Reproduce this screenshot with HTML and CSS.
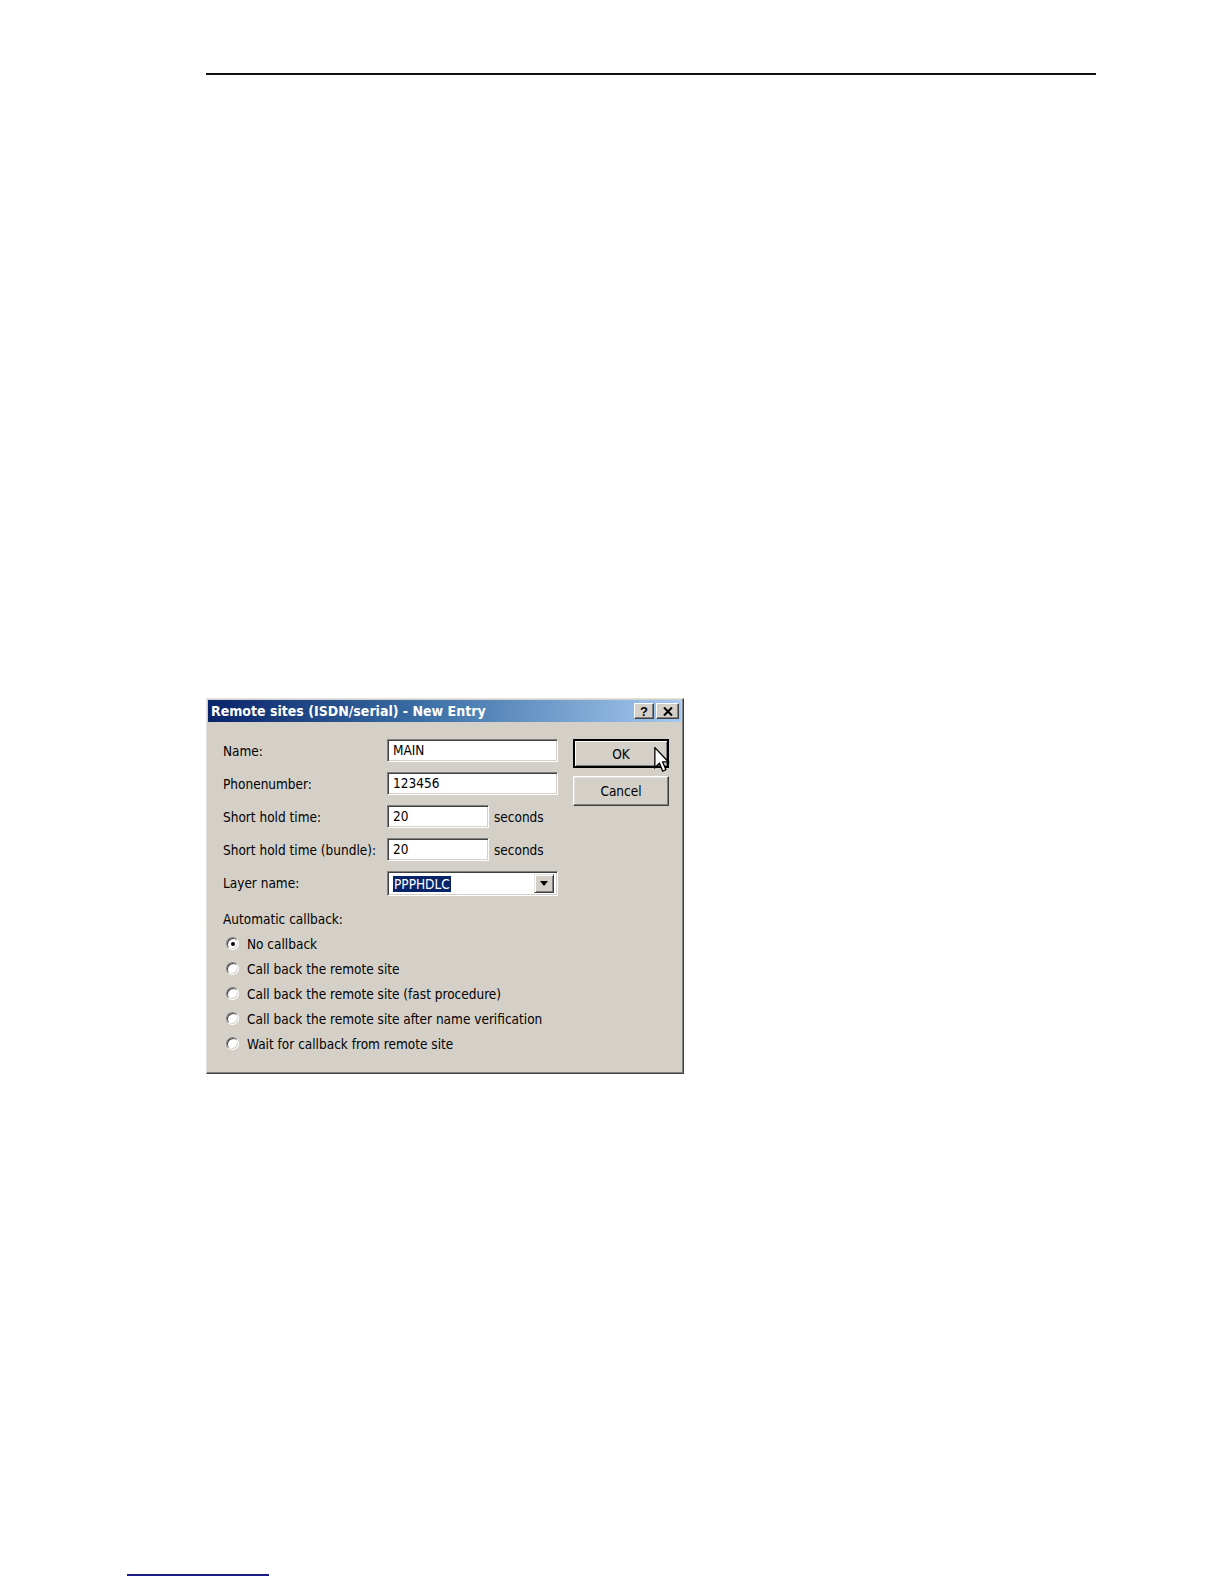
FILE: index.html
```html
<!DOCTYPE html>
<html lang="en">

<head>
    <meta charset="UTF-8">
    <meta name="viewport" content="width=device-width, initial-scale=1.0">
    <title>Remote sites (ISDN/serial) - New Entry</title>
    <link rel="stylesheet" href="styles.css">
</head>

<body>
    <div class="page">
        <div class="top-rule"></div>

        <div class="dialog">
            <div class="titlebar">
                <span class="title">Remote sites (ISDN/serial) - New Entry</span>
                <div class="title-buttons">
                    <div class="tbtn tbtn--help">?</div>
                    <div class="tbtn tbtn--close">
                        <svg width="10" height="9" viewBox="0 0 10 9">
                            <path d="M1 0.5 L9 8.5 M9 0.5 L1 8.5" stroke="#000" stroke-width="2" />
                        </svg>
                    </div>
                </div>
            </div>

            <div class="dialog-body">
                <div class="form">
                    <div class="fields">
                        <label class="field-label">Name:</label>
                        <div class="field-cell"><div class="textbox">MAIN</div></div>

                        <label class="field-label">Phonenumber:</label>
                        <div class="field-cell"><div class="textbox">123456</div></div>

                        <label class="field-label">Short hold time:</label>
                        <div class="field-cell">
                            <div class="textbox textbox--short">20</div>
                            <span class="unit">seconds</span>
                        </div>

                        <label class="field-label">Short hold time (bundle):</label>
                        <div class="field-cell">
                            <div class="textbox textbox--short">20</div>
                            <span class="unit">seconds</span>
                        </div>

                        <label class="field-label">Layer name:</label>
                        <div class="field-cell">
                            <div class="combo">
                                <span class="combo-value">PPPHDLC</span>
                                <div class="combo-btn">
                                    <svg width="8" height="5" viewBox="0 0 8 5">
                                        <path d="M0 0 L8 0 L4 5 Z" fill="#000" />
                                    </svg>
                                </div>
                            </div>
                        </div>
                    </div>

                    <div class="callback">
                        <div class="callback-title">Automatic callback:</div>
                        <div class="radio-row"><span class="radio radio--on"></span>No callback</div>
                        <div class="radio-row"><span class="radio"></span>Call back the remote site</div>
                        <div class="radio-row"><span class="radio"></span>Call back the remote site (fast procedure)</div>
                        <div class="radio-row"><span class="radio"></span>Call back the remote site after name verification</div>
                        <div class="radio-row"><span class="radio"></span>Wait for callback from remote site</div>
                    </div>
                </div>

                <div class="buttons">
                    <div class="btn btn--default">OK</div>
                    <div class="btn">Cancel</div>
                    <svg class="cursor" width="16" height="26" viewBox="0 0 12 20">
                        <path d="M0.5 0.5 L0.5 16 L4 12.5 L6.5 18.5 L9 17.5 L6.5 11.5 L11 11.5 Z" fill="#fff" stroke="#000" stroke-width="1" stroke-linejoin="miter" />
                    </svg>
                </div>
            </div>
        </div>

        <div class="foot-rule"></div>
    </div>
</body>

</html>
```

FILE: styles.css
```css
html {
    background-color: #fff;
}

body {
    margin: 0;
    font-family: "DejaVu Sans Condensed", "Liberation Sans", Arial, sans-serif;
    font-stretch: condensed;
    font-size: 13.5px;
    color: #000;
}

.page {
    width: 1224px;
    height: 1584px;
    overflow: hidden;
}

.top-rule {
    margin: 73px 0 0 206px;
    width: 890px;
    height: 2px;
    background: #111;
}

/* dialog window */

.dialog {
    box-sizing: border-box;
    margin: 623px 0 0 206px;
    width: 478px;
    height: 376px;
    background: #d4d0c8;
    border: 1px solid;
    border-color: #e4e2dc #404040 #404040 #e4e2dc;
    box-shadow: inset -1px -1px #808080;
    padding: 1px 2px 0 1px;
}

.titlebar {
    height: 22px;
    display: flex;
    align-items: center;
    justify-content: space-between;
    padding: 0 2px 0 3px;
    background: linear-gradient(to right, #0a246a 0%, #3a6ea5 45%, #a6caf0 100%);
}

.title {
    color: #fff;
    font-weight: bold;
    font-size: 14px;
}

.title-buttons {
    display: flex;
    gap: 2px;
}

.tbtn {
    box-sizing: border-box;
    width: 20px;
    height: 16px;
    background: #d4d0c8;
    border: 1px solid;
    border-color: #fff #404040 #404040 #fff;
    box-shadow: inset -1px -1px #808080;
    display: flex;
    align-items: center;
    justify-content: center;
    font-family: "Liberation Sans", Arial, sans-serif;
    font-weight: bold;
    font-size: 13px;
    line-height: 1;
}

.tbtn--close {
    width: 23px;
}

.dialog-body {
    display: flex;
    gap: 15px;
    padding: 17px 0 0 15px;
}

.form {
    width: 335px;
}

.fields {
    display: grid;
    grid-template-columns: 164px 171px;
    grid-auto-rows: 23px;
    row-gap: 10px;
    align-items: center;
}

.field-cell {
    display: flex;
    align-items: center;
    height: 23px;
}

.textbox {
    box-sizing: border-box;
    width: 171px;
    height: 23px;
    padding: 2px 0 0 5px;
    background: #fff;
    border: 1px solid;
    border-color: #808080 #fff #fff #808080;
    box-shadow: inset 1px 1px #404040, inset -1px -1px #d4d0c8;
}

.textbox--short {
    width: 102px;
}

.unit {
    margin-left: 5px;
}

.combo {
    box-sizing: border-box;
    width: 171px;
    height: 25px;
    margin-top: 2px;
    display: flex;
    align-items: center;
    justify-content: space-between;
    padding: 2px 3px 2px 5px;
    background: #fff;
    border: 1px solid;
    border-color: #808080 #fff #fff #808080;
    box-shadow: inset 1px 1px #404040, inset -1px -1px #d4d0c8;
}

.combo-value {
    background: #0a246a;
    color: #fff;
    padding: 0 1px;
    line-height: 16px;
}

.combo-btn {
    box-sizing: border-box;
    width: 20px;
    height: 19px;
    background: #d4d0c8;
    border: 1px solid;
    border-color: #e4e2dc #404040 #404040 #e4e2dc;
    box-shadow: inset 1px 1px #fff, inset -1px -1px #808080;
    display: flex;
    align-items: center;
    justify-content: center;
}

.callback {
    margin-top: 12px;
}

.callback-title,
.radio-row {
    height: 25px;
    display: flex;
    align-items: center;
}

.radio-row {
    gap: 8px;
    padding-left: 3px;
}

.radio {
    box-sizing: border-box;
    width: 13px;
    height: 13px;
    border-radius: 50%;
    background: #fff;
    border: 1px solid;
    border-color: #808080 #fff #fff #808080;
    box-shadow: inset 1px 1px #404040, inset -1px -1px #d4d0c8;
    position: relative;
}

.radio--on::after {
    content: "";
    position: absolute;
    left: 3.5px;
    top: 3.5px;
    width: 4px;
    height: 4px;
    border-radius: 50%;
    background: #000;
}

/* command buttons */

.buttons {
    position: relative;
    display: flex;
    flex-direction: column;
    gap: 8px;
}

.btn {
    box-sizing: border-box;
    width: 96px;
    height: 30px;
    display: flex;
    align-items: center;
    justify-content: center;
    background: #d4d0c8;
    border: 1px solid;
    border-color: #fff #404040 #404040 #fff;
    box-shadow: inset -1px -1px #808080, inset 1px 1px #e4e2dc;
}

.btn--default {
    height: 29px;
    border: 2px solid #000;
    box-shadow: inset 1px 1px #fff, inset -1px -1px #808080;
}

.cursor {
    position: absolute;
    left: 81px;
    top: 8px;
}

.foot-rule {
    margin: 500px 0 0 127px;
    width: 142px;
    height: 2px;
    background: #1c1c8a;
}
```
